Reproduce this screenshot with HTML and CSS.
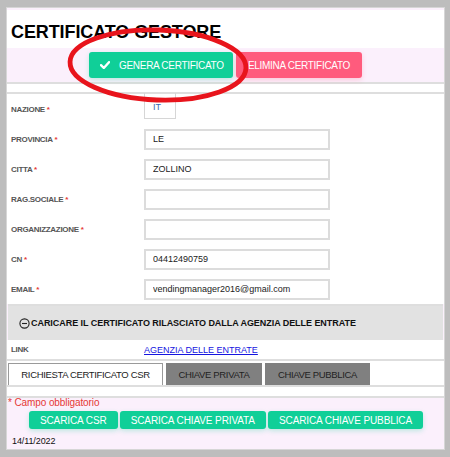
FILE: index.html
```html
<!DOCTYPE html>
<html lang="it">

    <head>
        <meta charset="UTF-8">
        <title>Certificato Gestore</title>
        <link rel="stylesheet" href="styles.css">
    </head>

    <body>
        <div class="panel">
            <header class="head">
                <h1>CERTIFICATO GESTORE</h1>
            </header>

            <div class="actions">
                <button class="btn btn-green">
                    <svg class="check" width="10" height="8" viewBox="0 0 10 8">
                        <path d="M1 4.2 L3.8 7 L9 1.2" fill="none" stroke="#fff" stroke-width="2.4" stroke-linecap="round" stroke-linejoin="round"/>
                    </svg>
                    GENERA CERTIFICATO
                </button>
                <button class="btn btn-pink">ELIMINA CERTIFICATO</button>
            </div>

            <div class="spacer"></div>

            <div class="form">
                <div class="row">
                    <label>NAZIONE <span class="req">*</span></label>
                    <div class="field-short">IT</div>
                </div>
                <div class="row">
                    <label>PROVINCIA <span class="req">*</span></label>
                    <input type="text" value="LE">
                </div>
                <div class="row">
                    <label>CITTA <span class="req">*</span></label>
                    <input type="text" value="ZOLLINO">
                </div>
                <div class="row">
                    <label>RAG.SOCIALE <span class="req">*</span></label>
                    <input type="text" value="">
                </div>
                <div class="row">
                    <label>ORGANIZZAZIONE <span class="req">*</span></label>
                    <input type="text" value="">
                </div>
                <div class="row">
                    <label>CN <span class="req">*</span></label>
                    <input type="text" value="04412490759">
                </div>
                <div class="row">
                    <label>EMAIL <span class="req">*</span></label>
                    <input type="text" value="vendingmanager2016@gmail.com">
                </div>
            </div>

            <div class="section-bar">
                <svg class="minus" width="11" height="11" viewBox="0 0 11 11">
                    <circle cx="5.5" cy="5.5" r="4.6" fill="none" stroke="#222" stroke-width="1.1"/>
                    <line x1="3" y1="5.5" x2="8" y2="5.5" stroke="#222" stroke-width="1.1"/>
                </svg>
                CARICARE IL CERTIFICATO RILASCIATO DALLA AGENZIA DELLE ENTRATE
            </div>

            <div class="link-row">
                <label>LINK</label>
                <a href="#">AGENZIA DELLE ENTRATE</a>
            </div>

            <div class="tabs">
                <div class="tab active">RICHIESTA CERTIFICATO CSR</div>
                <div class="tab tab-privata">CHIAVE PRIVATA</div>
                <div class="tab tab-pubblica">CHIAVE PUBBLICA</div>
            </div>
            <div class="tab-body"></div>

            <div class="footer">
                <p class="note">* Campo obbligatorio</p>
                <div class="downloads">
                    <button class="btn-small">SCARICA CSR</button>
                    <button class="btn-small">SCARICA CHIAVE PRIVATA</button>
                    <button class="btn-small">SCARICA CHIAVE PUBBLICA</button>
                </div>
                <div class="date">14/11/2022</div>
            </div>
        </div>

        <svg class="annotation" width="200" height="84" viewBox="0 0 200 84">
            <ellipse cx="99" cy="40" rx="88" ry="35" transform="rotate(2 99 40)" fill="none" stroke="#e8141c" stroke-width="4.8"/>
        </svg>
    </body>

</html>
```

FILE: styles.css
```css
:root {
    --green: #10cf98;
    --pink: #ff5b7d;
    --band: #fbf0fc;
    --line: #dedede;
    --label: #555;
}

* {
    box-sizing: border-box;
    margin: 0;
    padding: 0;
    font-family: 'Liberation Sans', Arial, sans-serif;
}

body {
    background: #bdbdbd;
    padding: 7px 5px 7px 6px;
    position: relative;
}

.panel {
    background: var(--band);
    border: 1px solid #d6d6d6;
    padding-top: 2px;
}

.head {
    background: white;
    height: 38px;
    padding: 13px 4px 0;
}

h1 {
    font-size: 18px;
    line-height: 18px;
    font-weight: 700;
    color: #000;
    letter-spacing: -0.1px;
}

.actions {
    height: 34px;
    padding-top: 4px;
    display: flex;
    justify-content: center;
    gap: 3px;
}

.btn {
    height: 26px;
    border: none;
    border-radius: 3px;
    color: white;
    font-size: 10px;
    letter-spacing: -0.3px;
    display: flex;
    align-items: center;
    box-shadow: 0 2px 5px rgba(16, 207, 152, 0.25);
}

.btn-green {
    background: var(--green);
    width: 144px;
    padding-left: 11px;
}

.check {
    margin-right: 9px;
}

.btn-pink {
    background: var(--pink);
    width: 126px;
    justify-content: center;
    box-shadow: 0 2px 5px rgba(255, 91, 125, 0.25);
}

.spacer {
    background: white;
    height: 12px;
    border-top: 2px solid var(--line);
    border-bottom: 2px solid var(--line);
}

.form {
    background: white;
}

.row {
    height: 30px;
    display: grid;
    grid-template-columns: 137px 186px;
    align-items: center;
}

label {
    padding-left: 4px;
    font-size: 8px;
    font-weight: 700;
    color: var(--label);
    letter-spacing: -0.3px;
}

.req {
    color: #e53935;
}

input {
    height: 21px;
    width: 186px;
    border: 2px solid #dcdcdc;
    padding-left: 7px;
    font-size: 9px;
    color: #222;
    background: white;
    outline: none;
}

.field-short {
    width: 32px;
    height: 26px;
    margin-top: -6px;
    border: 1px solid #d6d6d6;
    border-top: none;
    padding: 9px 0 0 8px;
    font-size: 9px;
    line-height: 10px;
    color: #3a68b0;
}

.section-bar {
    height: 36px;
    border-top: 2px solid var(--line);
    background: #e2e2e2;
    margin: 0 1px;
    padding-left: 11px;
    display: flex;
    align-items: center;
    gap: 1px;
    font-size: 9px;
    font-weight: 700;
    color: #111;
    letter-spacing: -0.05px;
}

.link-row {
    background: white;
    height: 21px;
    border-bottom: 2px solid var(--line);
    display: grid;
    grid-template-columns: 137px auto;
    align-items: center;
}

.link-row a {
    font-size: 9px;
    color: #1515e0;
    letter-spacing: 0;
}

.tabs {
    background: white;
    height: 26px;
    padding: 2px 0 0 1px;
    border-bottom: 2px solid var(--line);
    display: flex;
    gap: 3px;
}

.tab {
    height: 22px;
    background: #808080;
    color: #222;
    font-size: 9.5px;
    letter-spacing: -0.35px;
    display: flex;
    align-items: center;
    justify-content: center;
}

.tab.active {
    background: white;
    width: 155px;
    border: 1px solid #9a9a9a;
    border-bottom: none;
}

.tab-privata {
    width: 96px;
}

.tab-pubblica {
    width: 105px;
}

.tab-body {
    background: white;
    height: 11px;
    border-bottom: 2px solid var(--line);
}

.footer {
    padding: 0 0 3px 1px;
}

.note {
    font-size: 10px;
    line-height: 9px;
    color: #e53935;
    letter-spacing: -0.1px;
}

.downloads {
    margin-top: 4px;
    display: flex;
    justify-content: center;
    gap: 2px;
}

.btn-small {
    height: 18px;
    padding: 0 11px;
    border: none;
    border-radius: 3px;
    background: var(--green);
    color: white;
    font-size: 10px;
    letter-spacing: -0.1px;
    box-shadow: 0 2px 5px rgba(16, 207, 152, 0.25);
}

.date {
    margin-top: 7px;
    padding-left: 4px;
    font-size: 9px;
    line-height: 10px;
    color: #111;
    letter-spacing: -0.1px;
}

.annotation {
    position: absolute;
    left: 59px;
    top: 25px;
    pointer-events: none;
}
```
